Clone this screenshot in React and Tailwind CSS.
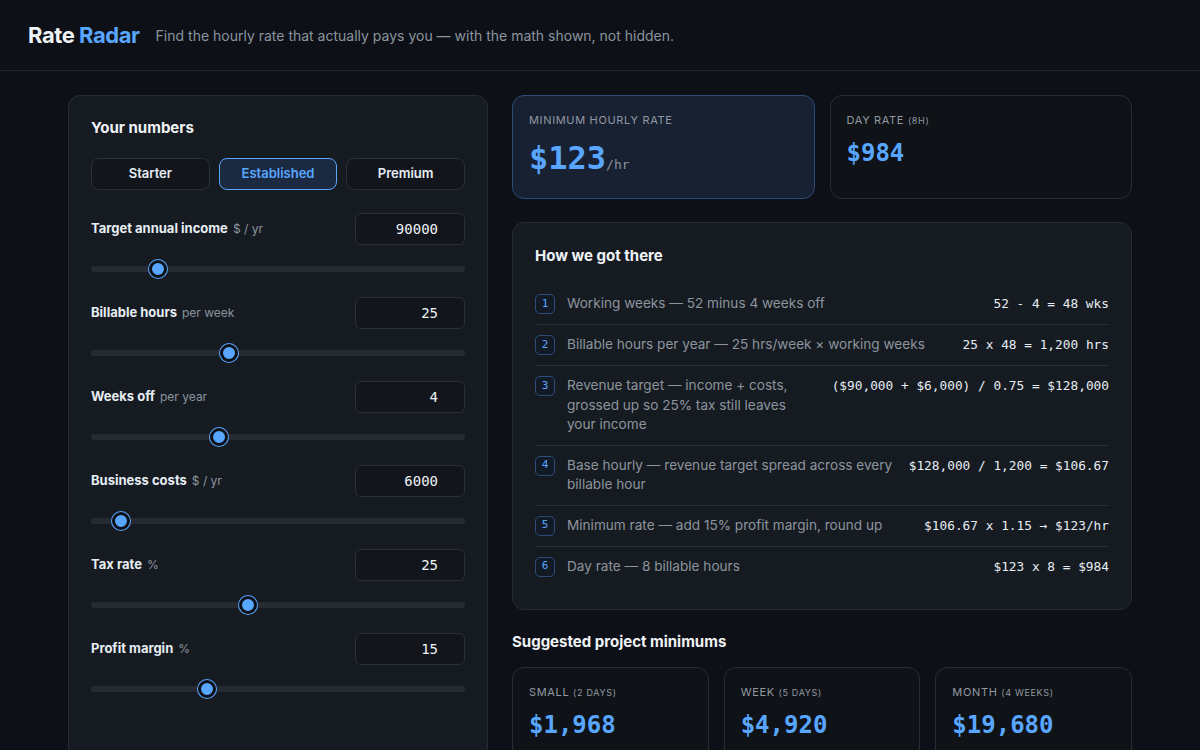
import React from "react";

const mono = { fontFamily: '"DejaVu Sans Mono", "Liberation Mono", monospace' };

const fields = [
  { label: "Target annual income", unit: "$ / yr", value: "90000", c: 67 },
  { label: "Billable hours", unit: "per week", value: "25", c: 138 },
  { label: "Weeks off", unit: "per year", value: "4", c: 128 },
  { label: "Business costs", unit: "$ / yr", value: "6000", c: 30 },
  { label: "Tax rate", unit: "%", value: "25", c: 157 },
  { label: "Profit margin", unit: "%", value: "15", c: 116 },
];

const steps = [
  { n: 1, text: "Working weeks — 52 minus 4 weeks off", f: "52 - 4 = 48 wks" },
  { n: 2, text: "Billable hours per year — 25 hrs/week × working weeks", f: "25 x 48 = 1,200 hrs" },
  { n: 3, text: "Revenue target — income + costs, grossed up so 25% tax still leaves your income", f: "($90,000 + $6,000) / 0.75 = $128,000" },
  { n: 4, text: "Base hourly — revenue target spread across every billable hour", f: "$128,000 / 1,200 = $106.67" },
  { n: 5, text: "Minimum rate — add 15% profit margin, round up", f: "$106.67 x 1.15 → $123/hr" },
  { n: 6, text: "Day rate — 8 billable hours", f: "$123 x 8 = $984" },
];

const projects = [
  { label: "SMALL", sub: "(2 DAYS)", value: "$1,968" },
  { label: "WEEK", sub: "(5 DAYS)", value: "$4,920" },
  { label: "MONTH", sub: "(4 WEEKS)", value: "$19,680" },
];

function Field({ f }) {
  return (
    <div className="flex flex-col">
      <div className="flex items-center justify-between h-8">
        <div className="text-[13px]">
          <span className="font-bold text-[#e6edf3]">{f.label}</span>
          <span className="text-[12px] text-[#8b949e] ml-[5px]">{f.unit}</span>
        </div>
        <div
          className="w-[110px] h-8 rounded-md border border-[#2a3038] bg-[#12161c] flex items-center justify-end pr-[26px] text-[14px] text-[#eef2f6]"
          style={mono}
        >
          {f.value}
        </div>
      </div>
      <div className="relative h-5 mt-[14px] flex items-center">
        <div className="w-full h-[6px] rounded-full bg-[#262b33]" />
        <div
          className="absolute top-[1px] w-[18px] h-[18px] rounded-full bg-[#58a6ff] border-[3px] border-[#0d1117] ring-1 ring-[#58a6ff]"
          style={{ left: `${f.c - 9}px` }}
        />
      </div>
    </div>
  );
}

export default function App() {
  return (
    <div className="min-h-screen bg-[#0d1117] text-[#e6edf3]" style={{ fontFamily: 'Inter, "Noto Sans", sans-serif' }}>
      <header className="h-[71px] border-b border-[#21262d] flex items-center px-7">
        <div className="text-[22px] font-bold tracking-[-0.02em]">
          <span className="text-[#f0f3f6]">Rate</span> <span className="text-[#58a6ff]">Radar</span>
        </div>
        <div className="ml-4 text-[14px] text-[#8b949e]">
          Find the hourly rate that actually pays you — with the math shown, not hidden.
        </div>
      </header>

      <main className="w-[1064px] mx-auto pt-6 grid grid-cols-[420px_620px] gap-6">
        <section className="rounded-xl border border-[#262c35] bg-[#161b22] px-[22px] pt-[21px] pb-[60px] self-start">
          <h2 className="text-[15px] font-bold leading-[22px] text-[#f0f3f6]">Your numbers</h2>
          <div className="grid grid-cols-3 gap-[9px] mt-[19px]">
            <button className="h-8 rounded-lg border border-[#2a3038] bg-[#12161c] text-[13px] font-semibold text-[#e6edf3]">Starter</button>
            <button className="h-8 rounded-lg border border-[#58a6ff] bg-[#1b2a40] text-[13px] font-semibold text-[#58a6ff]">Established</button>
            <button className="h-8 rounded-lg border border-[#2a3038] bg-[#12161c] text-[13px] font-semibold text-[#e6edf3]">Premium</button>
          </div>
          <div className="flex flex-col gap-[18px] mt-[23px]">
            {fields.map((f) => (
              <Field key={f.label} f={f} />
            ))}
          </div>
        </section>

        <section className="flex flex-col">
          <div className="grid grid-cols-2 gap-[15px]">
            <div className="h-[104px] rounded-xl border border-[#2d4c77] bg-[#172132] px-4 pt-[16px]">
              <div className="text-[11px] leading-4 tracking-[0.06em] text-[#9198a1]">MINIMUM HOURLY RATE</div>
              <div className="mt-[10px] flex items-baseline" style={mono}>
                <span className="text-[32px] font-bold text-[#58a6ff] leading-[40px]">$123</span>
                <span className="text-[13px] text-[#8b949e]">/hr</span>
              </div>
            </div>
            <div className="h-[104px] rounded-xl border border-[#262c35] bg-[#0f1318] px-4 pt-[16px]">
              <div className="text-[11px] leading-4 tracking-[0.06em] text-[#9198a1]">
                DAY RATE <span className="text-[9px]">(8H)</span>
              </div>
              <div className="mt-[8px] text-[24px] font-bold text-[#58a6ff] leading-[32px]" style={mono}>$984</div>
            </div>
          </div>

          <div className="mt-[23px] rounded-xl border border-[#262c35] bg-[#161b22] px-[22px] pt-[22px] pb-[22px]">
            <h2 className="text-[15px] font-bold leading-[22px] text-[#f0f3f6]">How we got there</h2>
            <div className="mt-[17px] flex flex-col">
              {steps.map((s, i) => (
                <div
                  key={s.n}
                  className={`flex items-start gap-3 py-[10px] ${i < steps.length - 1 ? "border-b border-[#2a3038]" : ""}`}
                >
                  <div
                    className="w-5 h-5 shrink-0 rounded-[5px] border border-[#2d4c77] bg-[#121a26] flex items-center justify-center text-[11px] text-[#58a6ff]"
                    style={mono}
                  >
                    {s.n}
                  </div>
                  <div className="flex-1 text-[13.6px] leading-[19.5px] text-[#8d949e]">{s.text}</div>
                  <div className="shrink-0 whitespace-nowrap text-[12.8px] leading-[19.5px] text-[#e6edf3] pl-1" style={mono}>
                    {s.f}
                  </div>
                </div>
              ))}
            </div>
          </div>

          <h2 className="mt-[22px] text-[15px] font-bold leading-5 text-[#f0f3f6]">Suggested project minimums</h2>
          <div className="mt-[15px] grid grid-cols-3 gap-[15px]">
            {projects.map((p) => (
              <div key={p.label} className="h-[110px] rounded-xl border border-[#262c35] bg-[#0f1318] px-4 pt-[16px]">
                <div className="text-[11px] leading-4 tracking-[0.06em] text-[#9198a1]">
                  {p.label} <span className="text-[9px]">{p.sub}</span>
                </div>
                <div className="mt-[8px] text-[24px] font-bold text-[#58a6ff] leading-[32px]" style={mono}>{p.value}</div>
              </div>
            ))}
          </div>
        </section>
      </main>
    </div>
  );
}
